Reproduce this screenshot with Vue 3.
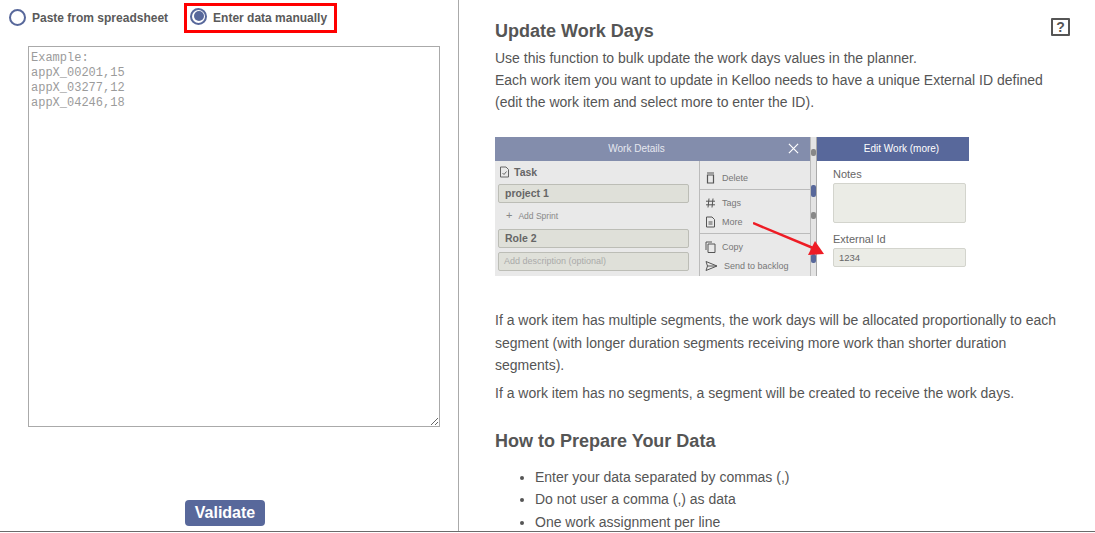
<script setup>
const examples = ['Example:', 'appX_00201,15', 'appX_03277,12', 'appX_04246,18']
const placeholder = examples.join('\n')
const bullets = ['Enter your data separated by commas (,)', 'Do not user a comma (,) as data', 'One work assignment per line']
</script>

<template>
  <div class="page">
    <section class="left">
      <div class="radios">
        <label class="radio first"><span class="dot"></span><span>Paste from spreadsheet</span></label>
        <label class="radio second"><span class="dot on"><i></i></span><span>Enter data manually</span></label>
      </div>
      <textarea class="data" :placeholder="placeholder"></textarea>
      <div class="actions"><button class="validate">Validate</button></div>
    </section>
    <section class="right">
      <div class="help-icon">?</div>
      <h2 class="h1">Update Work Days</h2>
      <p class="intro">Use this function to bulk update the work days values in the planner.<br>Each work item you want to update in Kelloo needs to have a unique External ID defined<br>(edit the work item and select more to enter the ID).</p>
      <div class="shot">
        <div class="details">
          <div class="bar light">Work Details
            <svg class="x" viewBox="0 0 12 12"><path d="M1 1l10 10M11 1L1 11" stroke="#fff" stroke-width="1.3" fill="none"/></svg>
          </div>
          <div class="dbody">
            <div class="dleft">
              <div class="task">
                <svg width="11" height="12" viewBox="0 0 11 12"><path d="M1.500 1h5.500l2.500 2.500v7.500h-8z M3.500 7l1.500 1.500 2.500-3" fill="none" stroke="#666" stroke-width="1"/></svg>
                Task
              </div>
              <div class="field strong">project 1</div>
              <div class="sprint"><span class="plus">+</span>Add Sprint</div>
              <div class="field strong">Role 2</div>
              <div class="field ph">Add description (optional)</div>
            </div>
            <div class="dright">
              <div class="menu-group one">
                <div class="mi"><svg width="11" height="12" viewBox="0 0 11 12"><path d="M2 1h7M2.500 3h6v8h-6z" fill="none" stroke="#555" stroke-width="1.200"/></svg>Delete</div>
              </div>
              <div class="menu-group two">
                <div class="mi"><svg width="11" height="12" viewBox="0 0 11 12"><path d="M4 1.500l-1 9M8 1.500l-1 9M1 4.200h9M1 7.800h9" fill="none" stroke="#555"/></svg>Tags</div>
                <div class="mi"><svg width="11" height="12" viewBox="0 0 11 12"><path d="M1.500 1h5.500l2.500 2.500v7.500h-8zM3.500 6h4M3.500 8h4" fill="none" stroke="#555"/></svg>More</div>
              </div>
              <div class="menu-group three">
                <div class="mi"><svg width="11" height="12" viewBox="0 0 11 12"><path d="M1 9V1h6M3 3h7v8.500h-7z" fill="none" stroke="#555"/></svg>Copy</div>
                <div class="mi"><svg width="13" height="12" viewBox="0 0 13 12"><path d="M1 1.500l11 4.500-11 4.500 1.500-4.500zM2.500 6h9" fill="none" stroke="#555"/></svg>Send to backlog</div>
              </div>
            </div>
          </div>
        </div>
        <div class="strip"><i class="s1"></i><i class="s2"></i><i class="s3"></i><i class="s4"></i></div>
        <div class="edit">
          <div class="bar dark">Edit Work (more)</div>
          <div class="ebody">
            <div class="elabel">Notes</div>
            <div class="notes"></div>
            <div class="elabel ext">External Id</div>
            <div class="extid">1234</div>
          </div>
        </div>
        <svg class="arrow" width="90" height="50" viewBox="0 0 90 50"><path d="M0 1L60 26" stroke="#ee1c25" stroke-width="2.500"/><path d="M71 32L55 33L62 19z" fill="#ee1c25"/></svg>
      </div>
      <p class="para seg">If a work item has multiple segments, the work days will be allocated proportionally to each segment (with longer duration segments receiving more work than shorter duration segments).</p>
      <p class="para none">If a work item has no segments, a segment will be created to receive the work days.</p>
      <h2 class="h2">How to Prepare Your Data</h2>
      <ul class="list"><li v-for="b in bullets" :key="b">{{ b }}</li></ul>
    </section>
  </div>
</template>

<style>
html, body { margin: 0; background: #fff; overflow: hidden; }
</style>

<style scoped>
.page {
  width: 1095px; height: 532px; box-sizing: border-box;
  display: grid; grid-template-columns: 459px 1fr;
  border-bottom: 1px solid #6b6b6b; overflow: hidden;
  font-family: "Liberation Sans", sans-serif; color: #555;
}
.left { border-right: 1px solid #aaa; box-sizing: border-box; display: flex; flex-direction: column; height: 531px; }
.radios { display: flex; align-items: flex-start; padding: 3px 0 0 9px; height: 46px; box-sizing: border-box; }
.radio { display: flex; align-items: center; gap: 6px; font-weight: 700; font-size: 12px; color: #5a5a5a; white-space: nowrap; }
.first { margin-top: 6px; }
.second { margin-left: 16px; border: 3px solid #f00; padding: 0 0 0 3px; height: 30px; width: 153px; box-sizing: border-box; gap: 6px; }
.second .dot { margin-top: -4px; }
.dot { width: 17px; height: 17px; border-radius: 50%; border: 2px solid #58689b; box-sizing: border-box; display: flex; align-items: center; justify-content: center; flex: none; background: #fff; }
.dot i { width: 10px; height: 10px; border-radius: 50%; background: #58689b; }
.data {
  display: block; margin-left: 28px; width: 412px; height: 381px; box-sizing: border-box;
  border: 1px solid #aaa; padding: 4px 2px; outline: none; border-radius: 0;
  font-family: "Liberation Mono", monospace; font-size: 12px; line-height: 15px; color: #555;
}
.data::placeholder { color: #9b9b9b; opacity: 1; }
.actions { display: flex; justify-content: center; padding-top: 73px; margin-left: -8px; }
.validate {
  width: 80px; height: 26px; border: 0; border-radius: 4px; background: #58689b; color: #fff; padding: 0;
  font-family: "Liberation Sans", sans-serif; font-weight: 700; font-size: 16px;
}
.right { position: relative; padding: 0 25px 0 36px; height: 531px; overflow: hidden; }
.help-icon {
  position: absolute; right: 25px; top: 18px; width: 19px; height: 18px; box-sizing: border-box;
  border: 2px solid #555; border-radius: 1px; text-align: center; font-weight: 700; font-size: 14px; line-height: 14px; color: #555;
}
.h1 { margin: 0; padding-top: 20px; font-size: 18px; line-height: 22px; font-weight: 700; color: #555; }
.intro { margin: 5px 0 0; font-size: 14px; line-height: 22px; color: #555; }
.shot {
  position: relative; display: flex; width: 474px; height: 139px; margin-top: 24px; overflow: hidden;
  font-size: 9px; color: #777;
}
.details { width: 315px; background: #e9e9e9; display: flex; flex-direction: column; flex: none; }
.bar { position: relative; height: 24px; line-height: 24px; text-align: center; background: #838dac; color: #e6e8f0; font-size: 10px; flex: none; box-sizing: border-box; }
.bar.light { padding-right: 32px; }
.bar.dark { background: #58689b; color: #fff; padding-left: 17px; }
.x { position: absolute; right: 11px; top: 6px; width: 11px; height: 11px; }
.dbody { display: flex; flex: 1; min-height: 0; }
.dleft { width: 204px; box-sizing: border-box; padding: 2px 10px 0 3px; }
.task { display: flex; align-items: center; gap: 4px; font-size: 10.500px; font-weight: 700; color: #666; height: 18px; padding-left: 1px; }
.field { height: 19px; box-sizing: border-box; background: #dfe0d9; border: 1px solid #bcbdb6; border-radius: 2px; line-height: 17px; padding-left: 6px; font-size: 10.500px; margin-top: 3px; }
.strong { font-weight: 700; color: #666; }
.sprint { height: 23px; line-height: 24px; padding-left: 8px; color: #888; font-size: 8.500px; }
.plus { font-size: 11px; margin-right: 6px; }
.field.ph { font-size: 9px; color: #aaa; padding-left: 5px; margin-top: 4px; }
.dright { flex: 1; border-left: 1px solid #bbb; color: #777; font-size: 9px; }
.menu-group { border-bottom: 1px solid #bbb; padding-left: 5px; box-sizing: border-box; }
.menu-group.one { height: 29px; padding-top: 7px; }
.menu-group.two { height: 44px; padding-top: 3px; }
.menu-group.three { border-bottom: 0; padding-top: 3px; }
.mi { display: flex; align-items: center; gap: 6px; height: 19px; font-size: 9px; }
.strip { width: 7px; background: #e4e4e4; border-left: 1px solid #bbb; border-right: 1px solid #aaa; box-sizing: border-box; position: relative; flex: none; }
.strip i { position: absolute; left: 0; width: 5px; border-radius: 2px; background: #888; }
.s1 { top: 12px; height: 7px; }
.s2 { top: 48px; height: 12px; background: #58689b !important; }
.s3 { top: 75px; height: 7px; }
.s4 { top: 117px; height: 9px; background: #58689b !important; }
.edit { flex: 1; display: flex; flex-direction: column; background: #fff; }
.ebody { padding: 6px 3px 0 16px; font-size: 11px; color: #666; }
.elabel { line-height: 15px; }
.notes { height: 40px; margin-top: 1px; box-sizing: border-box; background: #ebece6; border: 1px solid #d3d4cd; border-radius: 2px; }
.ext { margin-top: 9px; }
.extid { height: 19px; margin-top: 1px; box-sizing: border-box; background: #ebece6; border: 1px solid #d3d4cd; border-radius: 2px; padding-left: 5px; line-height: 17px; font-size: 9.500px; color: #666; font-weight: 400; }
.arrow { position: absolute; left: 258px; top: 85px; }
.para { margin: 0; font-size: 14px; line-height: 22.500px; color: #555; }
.seg { margin-top: 33px; }
.none { margin-top: 5px; }
.h2 { margin: 0; padding-top: 26px; font-size: 18px; line-height: 22px; font-weight: 700; color: #555; }
.list { margin: 14px 0 0; padding-left: 40px; font-size: 14px; line-height: 22.400px; color: #555; }
</style>
